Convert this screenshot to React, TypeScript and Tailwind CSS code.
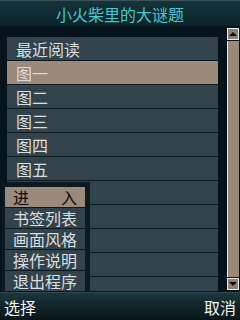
import React from 'react';

const rows = ['最近阅读', '图一', '图二', '图三', '图四', '图五', '', '', '', '', ''];
const menu = ['书签列表', '画面风格', '操作说明', '退出程序'];

const App: React.FC = () => {
  const selected = 1;

  return (
    <div
      className="relative w-[240px] h-[320px] overflow-hidden bg-[#07131a] flex flex-col text-[16px] leading-none"
      style={{ fontFamily: '"Noto Sans CJK SC", "Noto Sans", sans-serif' }}
    >
      {/* Title */}
      <div className="h-[26px] shrink-0 flex items-center justify-center border-t border-[#3a5258] bg-gradient-to-b from-[#12343a] to-[#0b2328] text-[#48c8d0]">
        小火柴里的大谜题
      </div>

      {/* Body */}
      <div className="h-[266px] shrink-0 flex overflow-hidden">
        <div className="ml-[7px] mt-[11px] w-[211px] h-[254px] overflow-hidden flex flex-col">
          {rows.map((r, i) => (
            <div
              key={i}
              className={`h-[24px] shrink-0 border-b border-[#0b1a20] flex items-center pl-[9px] text-[#dadede] ${
                i === selected ? 'bg-[#9b897a] text-[#0c0c0c]' : 'bg-[#33434b]'
              }`}
            >
              {r}
            </div>
          ))}
        </div>

        {/* Scrollbar */}
        <div className="ml-[9px] mt-[2px] w-[12px] h-[262px] flex flex-col gap-[1px]">
          <div className="h-[12px] shrink-0 border border-[#e8eeee] bg-[#8f8072] flex items-center justify-center">
            <div className="w-0 h-0 border-l-[4px] border-r-[4px] border-b-[4px] border-l-transparent border-r-transparent border-b-[#111]" />
          </div>
          <div className="flex-1 border-l border-[#e8eeee] bg-[#9b897a]" />
          <div className="h-[12px] shrink-0 border border-[#e8eeee] bg-[#8f8072] flex items-center justify-center">
            <div className="w-0 h-0 border-l-[4px] border-r-[4px] border-t-[4px] border-l-transparent border-r-transparent border-t-[#111]" />
          </div>
        </div>
      </div>

      {/* Soft keys */}
      <div className="flex-1 flex items-center justify-between px-[4px] border-t border-[#2c4a50] bg-gradient-to-b from-[#1c363c] to-[#081618] text-[#f2f4f4]">
        <span>选择</span>
        <span>取消</span>
      </div>

      {/* Popup menu */}
      <div className="absolute left-[2px] top-[182px] w-[88px] h-[110px] bg-[#0b1a21] pl-[3px] pr-[5px] pt-[5px] flex flex-col">
        <div className="h-[21px] shrink-0 border-b border-[#0b1a21] bg-[#9b897a] text-[#0c0c0c] flex items-center justify-between px-[8px]">
          <span>进</span>
          <span>入</span>
        </div>
        {menu.map((m) => (
          <div
            key={m}
            className="h-[21px] shrink-0 border-b border-[#0b1a21] bg-[#33434b] text-[#dadede] flex items-center px-[8px]"
          >
            {m}
          </div>
        ))}
      </div>
    </div>
  );
};

export default App;
